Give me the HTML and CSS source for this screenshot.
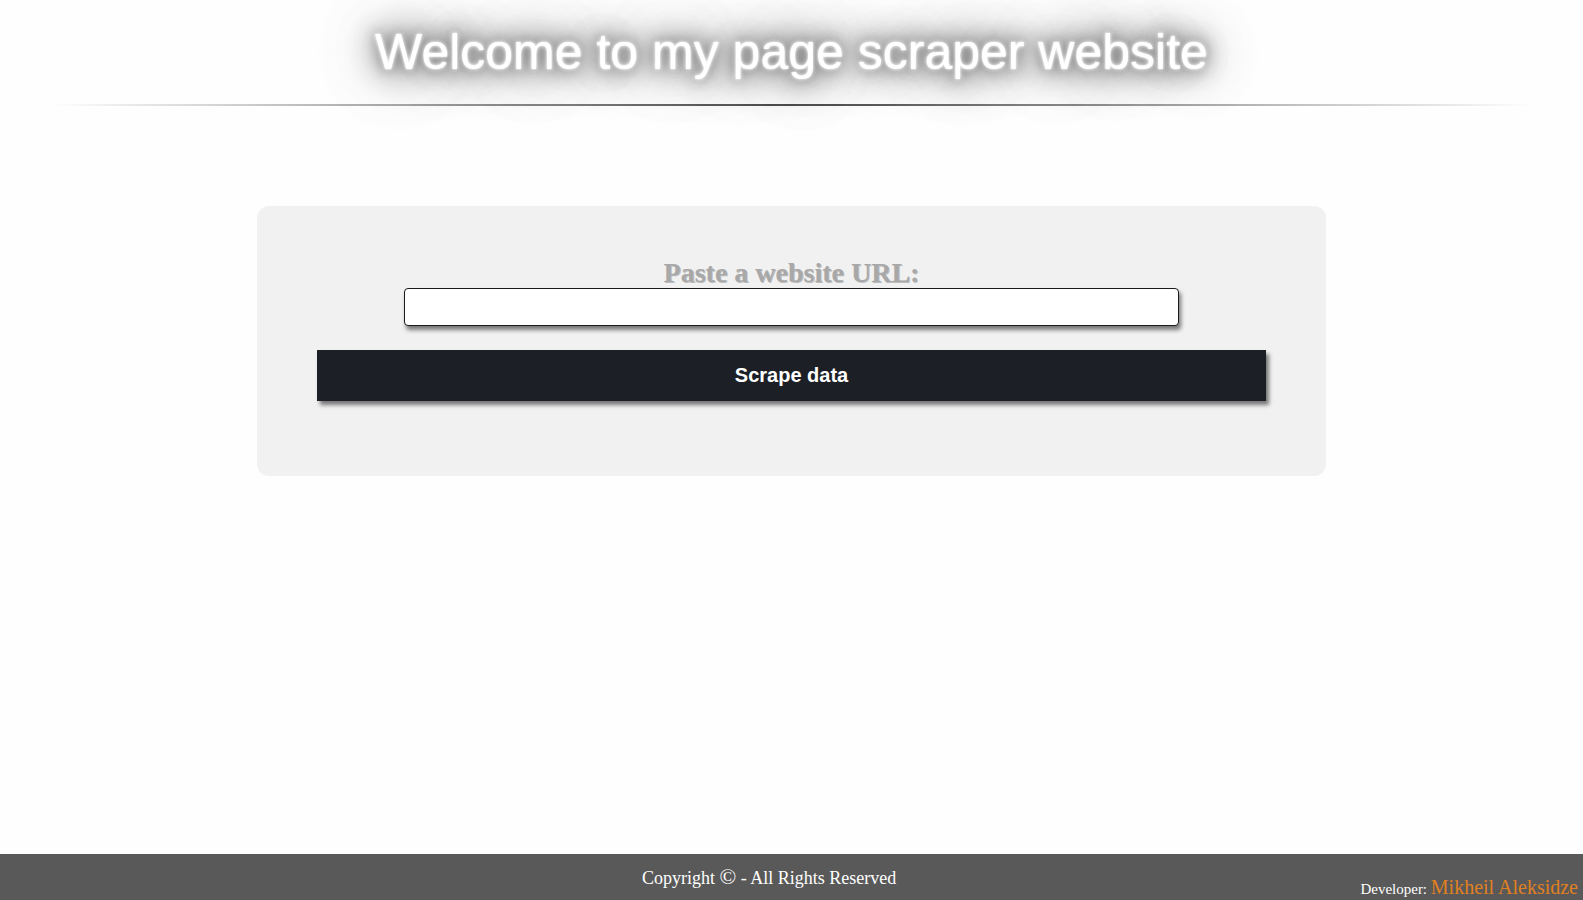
FILE: index.html
```html
<!DOCTYPE html>
<html lang="en">
<head>
<meta charset="utf-8">
<title>Page scraper</title>
<link rel="stylesheet" href="styles.css">
</head>
<body>
<header class="header">
  <h1 class="title">Welcome to my page scraper website</h1>
  <hr class="divider">
</header>
<main class="main">
  <form class="card">
    <label class="label" for="url">Paste a website URL:</label>
    <input class="input" id="url" type="text">
    <button class="button" type="button">Scrape data</button>
  </form>
</main>
<footer class="footer">
  <p class="copyright">Copyright <span class="copy-sign">&copy;</span> - All Rights Reserved</p>
  <p class="dev">Developer: <span class="dev-name">Mikheil Aleksidze</span></p>
</footer>
</body>
</html>
```
FILE: styles.css
```css
html, body {
  margin: 0;
  padding: 0;
  height: 100%;
}
body {
  background: #fefefe;
  font-family: "Liberation Serif", "Times New Roman", serif;
  display: flex;
  flex-direction: column;
}
.header {
  padding: 0 50px;
}
.title {
  margin: 0;
  padding-top: 25px;
  text-align: center;
  font-family: "Liberation Sans", Arial, sans-serif;
  font-weight: normal;
  font-size: 50px;
  line-height: 1.117;
  color: #fff;
  text-shadow: 0 0 2px #fff, 0 0 5px #fff, 0 0 12px #777, 0 0 20px #777, 0 0 30px #808080, 0 0 45px #888, 0 0 65px #999, 0 0 90px #bbb;
}
.divider {
  margin: 23px 0 0;
  border: 0;
  height: 2px;
  background-image: linear-gradient(to right, rgba(0,0,0,0), rgba(0,0,0,0.75), rgba(0,0,0,0));
}
.main {
  flex: 1;
  padding-top: 100px;
}
.card {
  width: 949px;
  margin: 0 auto;
  padding: 51px 60px 75px;
  background: #f1f1f1;
  border-radius: 12px;
  display: flex;
  flex-direction: column;
  align-items: center;
}
.label {
  font-weight: bold;
  font-size: 28px;
  line-height: 31px;
  color: #a8a8a8;
  text-shadow: 1px 1px 0 #bcbcbc;
}
.input {
  box-sizing: border-box;
  width: 775px;
  height: 38px;
  margin: 0;
  border: 1px solid #1b1b1b;
  border-radius: 4px;
  background: #fff;
  box-shadow: 2px 4px 4px #777;
}
.button {
  margin-top: 24px;
  width: 100%;
  height: 51px;
  border: 0;
  background: #1d1f26;
  color: #fff;
  font-family: "Liberation Sans", Arial, sans-serif;
  font-weight: bold;
  font-size: 20px;
  box-shadow: 3px 4px 4px #777;
}
.footer {
  height: 46px;
  background: #595959;
  color: #fff;
  display: flex;
  align-items: flex-start;
  padding-right: 5px;
}
.copyright {
  margin: 14px 0 0 642px;
  font-size: 18px;
  line-height: 20px;
}
.copy-sign {
  font-size: 22px;
  line-height: 18px;
}
.dev {
  margin: 23px 0 0 auto;
  font-size: 15px;
  line-height: 20px;
}
.dev-name {
  color: #e0801f;
  font-size: 20px;
}
```
